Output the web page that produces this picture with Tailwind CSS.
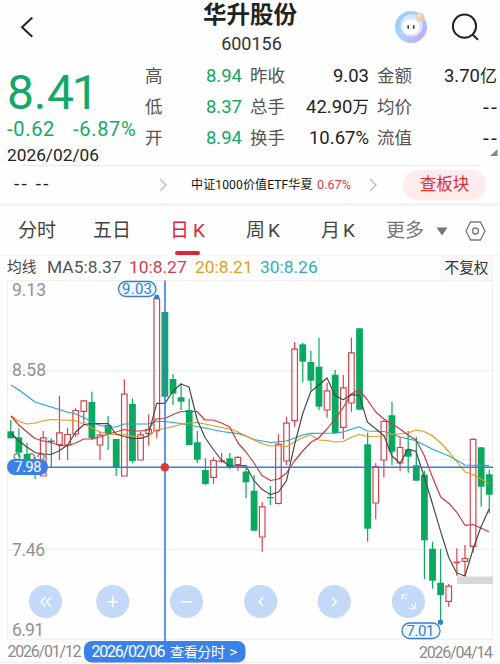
<!DOCTYPE html>
<html lang="zh-CN">
<head>
<meta charset="utf-8">
<title>华升股份 600156</title>
<script src="https://cdn.jsdelivr.net/npm/@tailwindcss/browser@4"></script>
</head>
<body class="w-[500px] h-[664px] overflow-hidden bg-[#fefefe] text-[#222] font-[Roboto,'Noto_Sans_CJK_SC',sans-serif]">
<header class="h-[60px] grid grid-cols-[140px_1fr_140px]">
  <div class="pl-[19px] pt-[15px]">
    <svg width="16" height="24" viewBox="0 0 16 24" fill="none" stroke="#222" stroke-width="2"><path d="M13.3 2.5 3 12.3l10.3 9.5"/></svg>
  </div>
  <div class="text-center">
    <h1 class="text-[23.5px] leading-[31px] font-bold">华升股份</h1>
    <div class="text-[18px] leading-[20px] pt-[3px] pl-[3px] text-[#333]">600156</div>
  </div>
  <div class="flex pl-[34px] pt-[10px]">
    <svg width="34" height="34" viewBox="0 0 34 34">
      <defs>
        <linearGradient id="ring" x1="0" y1="0.1" x2="1" y2="0.9"><stop offset="0" stop-color="#8fcdf8"/><stop offset=".45" stop-color="#b4cffb"/><stop offset="1" stop-color="#bba6f5"/></linearGradient>
        <linearGradient id="inner" x1="0" y1="0" x2="0" y2="1"><stop offset="0" stop-color="#d4e8fd"/><stop offset="1" stop-color="#e9e2fd"/></linearGradient>
      </defs>
      <circle cx="17" cy="17" r="16" fill="url(#ring)"/>
      <circle cx="17.5" cy="15.5" r="11" fill="url(#inner)"/>
      <rect x="8.5" y="9.5" width="16.5" height="14.5" rx="6.5" fill="#fff"/>
      <rect x="13.4" y="15" width="1.6" height="4" rx=".8" fill="#333b63"/><rect x="19" y="15" width="1.6" height="4" rx=".8" fill="#333b63"/>
      <circle cx="26.5" cy="7" r="3.9" fill="#f3c9a8"/><circle cx="25.5" cy="6" r="1.8" fill="#fbe3c8"/>
    </svg>
    <svg class="ml-[22px] mt-[3px]" width="30" height="30" viewBox="0 0 30 30" fill="none" stroke="#222" stroke-width="2"><circle cx="14.5" cy="13.2" r="11.6"/><path d="m22.5 21.5 5.5 5.3"/></svg>
  </div>
</header>

<section class="h-[105px] grid grid-cols-[145px_97px_8px_119px_8px_120px] relative">
  <div class="pl-[7px] text-[#14a866] whitespace-nowrap">
    <div class="text-[48px] leading-[50px] pt-[8px] tracking-[-2.3px]">8<span class="tracking-[0.6px] pl-[2px]">.</span>41</div>
    <div class="flex text-[20px] leading-[23px] tracking-[0.7px]"><span class="w-[66px]">-0.62</span><span>-6.87%</span></div>
    <div class="text-[17.3px] leading-[22px] pt-[3px] text-[#222]">2026/02/06</div>
  </div>
  <dl class="pt-px text-[18.5px] leading-[31px]">
    <div class="flex justify-between"><dt class="text-[17.5px] text-[#555]">高</dt><dd class="text-[#14a866]">8.94</dd></div>
    <div class="flex justify-between"><dt class="text-[17.5px] text-[#555]">低</dt><dd class="text-[#14a866]">8.37</dd></div>
    <div class="flex justify-between"><dt class="text-[17.5px] text-[#555]">开</dt><dd class="text-[#14a866]">8.94</dd></div>
  </dl>
  <i></i>
  <dl class="pt-px text-[18.5px] leading-[31px]">
    <div class="flex justify-between"><dt class="text-[17.5px] text-[#555]">昨收</dt><dd>9.03</dd></div>
    <div class="flex justify-between"><dt class="text-[17.5px] text-[#555]">总手</dt><dd>42.90<span class="text-[16.5px]">万</span></dd></div>
    <div class="flex justify-between"><dt class="text-[17.5px] text-[#555]">换手</dt><dd>10.67%</dd></div>
  </dl>
  <i></i>
  <dl class="pt-px text-[18.5px] leading-[31px]">
    <div class="flex justify-between"><dt class="text-[17.5px] text-[#555]">金额</dt><dd>3.70<span class="text-[17px]">亿</span></dd></div>
    <div class="flex justify-between"><dt class="text-[17.5px] text-[#555]">均价</dt><dd class="text-[21px] tracking-[2.2px] -mr-[2px]">--</dd></div>
    <div class="flex justify-between"><dt class="text-[17.5px] text-[#555]">流值</dt><dd class="text-[21px] tracking-[2.2px] -mr-[2px]">--</dd></div>
  </dl>
  <svg class="absolute left-[490px] top-[89px]" width="8" height="8"><path d="M7.5 0v7H0z" fill="#888"/></svg>
</section>

<section class="h-[41px] border-b-[3px] border-[#f2f2f3]">
  <div class="ml-5 w-[460px] h-px bg-[#ebebeb]"></div>
  <div class="h-[37px] flex items-center">
    <span class="w-[145px] pl-[14px] text-[19px] tracking-[2.2px] whitespace-pre">-- --</span>
    <svg class="ml-[13px]" width="10" height="14" viewBox="0 0 10 14" fill="none" stroke="#bbb" stroke-width="1.3"><path d="m2 1 6 6-6 6"/></svg>
    <span class="ml-[23px] w-[126px] text-[12px] whitespace-nowrap text-[#111] tracking-[0.15px]">中证1000价值ETF华夏</span>
    <span class="w-[51px] text-[12.7px] text-[#d93a45]">0.67%</span>
    <svg width="10" height="14" viewBox="0 0 10 14" fill="none" stroke="#bbb" stroke-width="1.3"><path d="m2 1 6 6-6 6"/></svg>
    <span class="ml-[25px] w-[83px] h-[30px] rounded-full bg-[#fdeceb] text-[#dc2f3a] text-[16.5px] leading-[29px] text-center">查板块</span>
  </div>
</section>

<nav class="h-[50px] grid grid-cols-[75px_76px_76px_76px_76px_86px_35px] text-[19px] leading-[50px] text-[#444] border-b border-[#f4f4f4] whitespace-nowrap">
  <span class="pl-[18px]">分时</span>
  <span class="pl-[18px]">五日</span>
  <span class="pl-[19px] text-[#e0223c] relative">日<span class="pl-1">K</span><i class="absolute left-[24px] bottom-[1px] w-[25px] h-[4px] rounded-full bg-[#e0223c]"></i></span>
  <span class="pl-[19px]">周<span class="pl-[3px]">K</span></span>
  <span class="pl-[18px]">月<span class="pl-[3px]">K</span></span>
  <span class="pl-[7px] text-[#777] flex items-center">更多<svg class="ml-[12px]" width="12" height="9"><path d="M.5.5h11l-5.5 8z" fill="#777"/></svg></span>
  <svg class="mt-[14px]" width="21" height="22" viewBox="0 0 21 22" fill="none" stroke="#777" stroke-width="1.3"><path d="M5.6 2h9.8L20 11l-4.6 9H5.6L1 11z"/><circle cx="10.5" cy="11" r="3"/></svg>
</nav>

<div class="h-[24px] flex text-[17.4px] leading-[23px] whitespace-nowrap">
  <span class="w-[47px] pl-[7px] text-[14.7px] text-[#444]">均线</span>
  <span class="w-[82px] text-[#555]">MA5:8.37</span>
  <span class="w-[66px] text-[#d93a45]">10:8.27</span>
  <span class="w-[65px] text-[#dfa01e]">20:8.21</span>
  <span class="w-[180px] text-[#34a9c6]">30:8.26</span>
  <span class="w-[53px] h-[24px] bg-[#f8f8f8] text-center leading-[24px] text-[14.7px] text-[#333]">不复权</span>
</div>

<svg id="chart" class="block" width="500" height="384" viewBox="0 280 500 384" font-family="Roboto, 'Noto Sans CJK SC', sans-serif">
  <g stroke="#efefef" fill="none"><path d="M7.5 280.5h485v359h-485zM7 370.5h486M7 459.5h486M7 549.5h486"/><path d="M0 662.5h500" stroke="#eee"/></g>
  <rect x="457" y="576.5" width="36" height="7.5" fill="#d8d8d8"/>
  <g id="scale" font-size="17.5" fill="#929292">
    <text x="12" y="295.5" textLength="34">9.13</text>
    <text x="12" y="376.3" textLength="34">8.58</text>
    <text x="12" y="466" textLength="34">8.02</text>
    <text x="12" y="556" textLength="33">7.46</text>
    <text x="12" y="635.5" textLength="32">6.91</text>
  </g>
  <g id="candles" stroke-width="1.2"></g>
  <g id="averages" fill="none" stroke-width="1.2" stroke-linejoin="round"></g>
  <g id="controls" fill="none" stroke="#fff" stroke-width="1.5">
    <g fill="#3c86e8" fill-opacity=".3" stroke="none">
      <circle cx="45.5" cy="601.5" r="16.6"/><circle cx="112.7" cy="601.5" r="16.6"/><circle cx="186.5" cy="601.5" r="16.6"/><circle cx="260.7" cy="601.5" r="16.6"/><circle cx="334.3" cy="601.5" r="16.6"/><circle cx="408.5" cy="601.5" r="16.6"/>
    </g>
    <path d="m45.5 597-4.5 4.7 4.5 4.7M51 597l-4.5 4.7 4.5 4.7M107.5 601.7h10.5M112.7 596.5v10.5M181 601.7h11M263 597.5l-4 4.2 4 4.2M332.3 597.5l4 4.2-4 4.2"/>
    <path d="M402 600.5v-5.8h6M402 594.7l4.5 4.5M409.5 608.5h6v-6M415.5 608.5l-4.5-4.5" stroke-width="1.3" stroke-opacity=".75"/>
  </g>
  <path d="M8 467.2h485M165 280.5v361" stroke="#3a7de0" stroke-width="1.6"/>
  <circle cx="164.8" cy="467.2" r="4" fill="#e03535" stroke="#b5485a" stroke-width=".6"/>
  <rect x="7" y="459" width="41" height="16" rx="8" fill="#3b82e8"/>
  <text x="14.5" y="472.3" font-size="14.5" fill="#fff" textLength="27">7.98</text>
  <g fill="#eef8fe" stroke="#3580c8" stroke-width="1.3"><rect x="118.5" y="281.5" width="37.5" height="15" rx="7.5"/><rect x="402" y="623" width="38" height="15.5" rx="7.5"/></g>
  <g fill="#3580c8"><circle cx="156.7" cy="297" r="2.6"/><circle cx="440.5" cy="622.3" r="2.7"/>
    <text x="122" y="294.4" font-size="15" textLength="30">9.03</text><text x="406.5" y="636.3" font-size="15" textLength="28">7.01</text></g>
  <g font-size="16" fill="#8b8b8b"><text x="7.5" y="656.5" textLength="74">2026/01/12</text><text x="419" y="657.5" textLength="74">2026/04/14</text></g>
  <rect x="84" y="641" width="161.5" height="21.5" rx="8" fill="#3b82e8"/>
  <g fill="#fff"><text x="91.5" y="656.5" font-size="16" textLength="74">2026/02/06</text><text x="170" y="656.5" font-size="14" textLength="55">查看分时</text><text x="229.5" y="656.5" font-size="15">&gt;</text></g>
</svg>

<script>
const STEP = 8.11, START = 10.8;
// rising flag, high, body top, body bottom, low (chart y units)
const candles = [
[0,420,431.3,438.3,438.3],[0,428.3,437.3,452.7,457],[0,442.7,454,462,466],[0,457,462,474,479],[1,431,437.3,476.3,476.3],
[0,438.3,440.5,442,467],[1,395.7,432.3,445,460],[1,427.7,434,445.3,460],[1,408.3,410,434.3,437],[1,400,400.3,411.7,423.3],
[0,391.7,402,438,440],[1,431.7,434.7,445.3,460],[0,416,425,433.3,450],[0,439,439,467,476],[1,379.3,393.7,476.3,476.3],
[0,398.3,404,461,463],[1,431.7,434.3,460.3,460.3],[1,414.3,429,434,445.7],[1,297,298,431,438.3],[0,311.7,312,396.7,397],
[0,374.3,379,393.7,405],[0,383.3,397.3,401.7,410],[0,398.7,410,445,445],[0,431,442.3,459.7,463],[0,458.3,470,484,485.3],
[1,457.3,460,477.7,483.7],[1,453,460.3,461.5,463],[0,453,458.3,467,469.3],[1,456.3,456.8,465,470.7],[0,468,471.5,482.3,498.3],
[0,475,490.7,530.7,530.7],[1,501.7,506.3,537.3,551.7],[0,485.7,497,498.3,505],[1,434.3,443.7,503.7,504.5],[1,416.7,422.7,461.3,465],
[1,342,348.7,421,426.7],[0,342.7,344.3,361.7,382.3],[0,350.7,362,380.7,390],[0,337.7,366.7,406.7,410],[1,382.7,390.3,410.3,417.7],
[0,370,374.7,433.3,433.3],[1,375,387.3,427.7,439],[1,337.7,352.3,403.3,411.7],[0,328.3,328.3,409.7,409.7],[0,432.7,444.3,528.7,541.7],
[1,463.3,466,503.3,519.3],[1,420,421,460.3,477.3],[0,401.7,415.3,451.7,465],[1,436.7,447,463.3,471],[0,431,449.3,456.7,472.7],
[0,436.7,465.3,480.7,480.7],[0,470.7,474.7,540.3,579],[0,541.7,548.7,580.7,588.7],[0,548.7,582.7,595,622.3],[1,584,585.7,601.7,606.7],
[1,548.3,561.5,563,576],[1,545,558,561.7,576],[1,438.3,438.8,546.7,552.7],[0,447,447.3,486.7,506.7],[0,469.7,474.3,494.7,513.3]];
const RED = '#d4454b', GREEN = '#0aa960';
document.getElementById('candles').innerHTML = candles.map(([up, hi, top, bot, lo], i) => {
  const x = START + STEP * i;
  const c = up ? RED : GREEN;
  return up
    ? `<path d="M${x} ${hi}V${top}M${x} ${bot}V${lo}M${x - 2.8} ${top + .5}h5.6V${bot - .3}h-5.6z" stroke="${c}" fill="none"/>`
    : `<path d="M${x} ${hi}V${lo}" stroke="${c}"/><rect x="${x - 3.4}" y="${top}" width="6.8" height="${bot - top}" fill="${c}"/>`;
}).join('');
const lines = {
'#27a7cc': '11,385 19,390 27,396 35,402 51,407 67,412 75.7,414 83.7,417.5 92,422 100,425.5 108,427 116,427 124,424 148,424 156,421.5 165,421.5 181,423.5 205,428 221.7,431.5 238,433.7 246,436 254,439.5 270.5,442.5 286.5,441 302.6,435 310.7,433.3 335,433 343,432 359,426.7 367.5,431 384,431.5 392,434 400,437 416,440.7 432,449 449,456 465,465 489,465.7',
'#e59a16': '11,416 19,421.5 27,424 35,423 43,421 51,419.5 75,420.5 83.7,424 92,428 100,432 108,434 116,434.5 124,434.5 132,436 140.7,437.5 148,436.5 156,430 165,428.5 173,426.5 181,424.5 189,423 197,422.5 205,424 221.7,427.5 234,430 246,436 254,440 262,443.5 270.5,446 278,445.5 286.5,446.5 294.5,442 302.6,437.5 310.7,435 319,440 327,440.5 335,442 343,441.5 351,437.5 359,434.5 367.5,436.5 384,436 392,434 400,434 408,433 416,430 424,431.5 432,435.5 440.7,443 449,452 457,462 465,472 473,474.5 481,479 489,484',
'#c93a42': '11,416 18.7,425 27,432 35,438.5 43,441 51,442.5 59,445.3 67,446 75.7,443 83.7,439 92,438.8 100,437 108,434 116,432 124,429.5 132,431 140.7,431 148,430 156,419 165,418.5 173,414.5 181,411.5 197,411.5 205,420 213,420 221.7,423 229.7,427 238,443 246,452 254,463 262,475.5 270.5,480.5 278.5,479 286.5,473 294.5,461 302.6,451 310.7,442.5 319,437.5 327,429 335,419 343,408 351,394 359,390 367.5,400 375.7,412 384,419 392,424 400,429 408,435 416,440 424,455 432,476 440.7,497 449,503.5 457,512.5 465,525.3 473,524.5 481,528 489,532',
'#4a4a4a': '11,433 18.7,441 27,447 35,452.5 43,454 51,454.5 59,451 67.6,445 75.7,432 83.7,424.7 92,423.5 108,423.7 116,434 124,436.5 132,438.5 140.7,438.5 148,436 156.7,403.3 165,403.3 173,391 181,384 189,387 197.3,420 205,437.5 213,449 221.7,460.5 229.7,466 246,465.7 254,480.7 262,489.3 270.5,494.7 278.5,492 286.5,480.7 294.5,445 302.6,414 310.7,391.7 318.8,385 327,378 335,395.3 343,399.7 351,394.7 359.4,395.3 367.5,422.3 375.7,428.7 384,435.7 392,456 400,463.3 408,449 416,451.3 424.3,477.3 432.3,503.3 440.7,531.7 448.7,557.3 456.7,573 465,576 473,549.3 481,526.7 489,509.3'};
document.getElementById('averages').innerHTML = Object.entries(lines).map(([c, p]) => `<polyline points="${p}" stroke="${c}"/>`).join('');
</script>
</body>
</html>
